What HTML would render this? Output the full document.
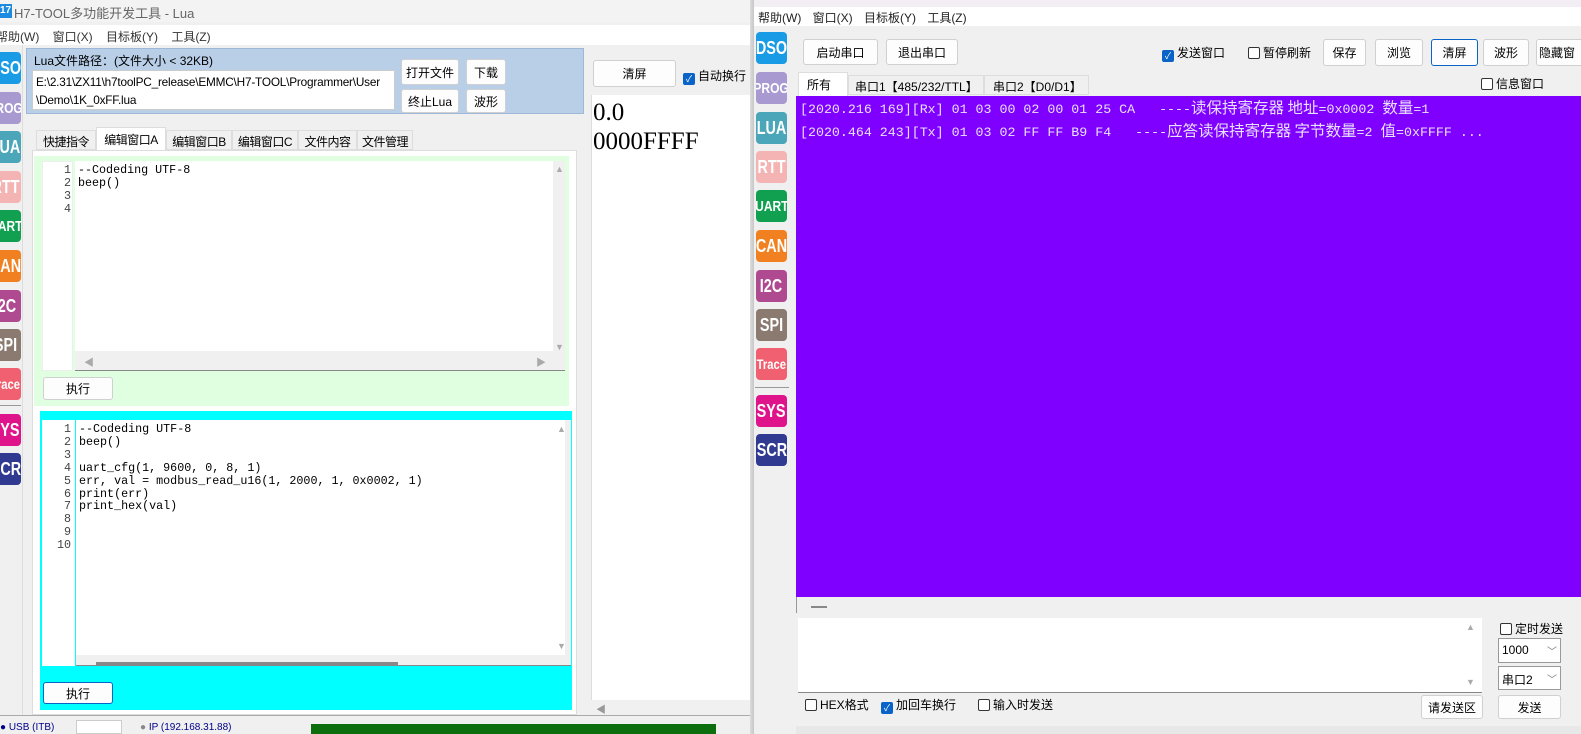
<!DOCTYPE html><html><head><meta charset="utf-8"><style>
*{box-sizing:border-box;margin:0;padding:0}
body{width:1581px;height:734px;position:relative;overflow:hidden;background:#f0f0f0;font-family:"Liberation Sans","Noto Sans CJK SC",sans-serif;font-size:12px;color:#000}
.a{position:absolute;white-space:nowrap}
.ic{position:absolute;width:31px;height:32px;border-radius:4px;color:#fff;font-weight:bold;font-size:18px;display:flex;align-items:center;justify-content:center;font-family:"Liberation Sans Narrow","Liberation Sans",sans-serif;overflow:hidden}
.ic span{display:inline-block;transform:scaleX(.8)}
.btn{position:absolute;background:#fdfdfd;border:1px solid #d0d0d0;border-radius:3px;display:flex;align-items:center;justify-content:center;font-size:12px;white-space:nowrap}
.code{font-family:"Liberation Mono","Noto Sans CJK SC",monospace;font-size:11.7px;line-height:12.9px;white-space:pre}
.cb{display:inline-block;width:12px;height:12px;border:1px solid #333;border-radius:2px;vertical-align:-2px;margin-right:3px;background:#fff}
.cbk{background:#0a64c8;border-color:#0a64c8;color:#fff;font-size:9px;line-height:10px;text-align:center}
.tab{position:absolute;top:130px;height:20px;border:1px solid #ddd;font-size:12px;padding:2px 0;text-align:center;white-space:nowrap;letter-spacing:-0.5px}
.pt{font-family:"Liberation Mono",monospace;font-size:13.3px}
.pc{font-family:"Noto Sans CJK SC",sans-serif;font-size:15.5px}
</style></head><body>
<!-- left window -->
<div class="a" style="left:0;top:0;width:750px;height:22px;background:#f3f3f3"></div>
<div class="a" style="left:0;top:4px;width:12px;height:14px;background:#1a8be0;color:#fff;font-size:10px;font-weight:bold;line-height:14px">17</div>
<div class="a" style="left:14px;top:3px;color:#666;font-size:13px">H7-TOOL多功能开发工具 - Lua</div>
<div class="a" style="left:0;top:25px;width:750px;height:20px;background:#fff"></div>
<div class="a" style="left:-4px;top:28px;font-size:12px;color:#333;word-spacing:10px">帮助(W) 窗口(X) 目标板(Y) 工具(Z)</div>
<div class="a" style="left:0;top:45px;width:23px;height:670px;background:#f0f0f0;border-right:1px solid #ddd"></div>
<div class="ic" style="left:-10px;top:52px;background:#1a9be6"><span>DSO</span></div>
<div class="ic" style="left:-10px;top:92px;background:#a89ad0;font-size:15px"><span>PROG</span></div>
<div class="ic" style="left:-10px;top:131px;background:#4aa6b8"><span>LUA</span></div>
<div class="ic" style="left:-10px;top:171px;background:#f5b4b4"><span>RTT</span></div>
<div class="ic" style="left:-10px;top:210px;background:#10a050;font-size:15px"><span>UART</span></div>
<div class="ic" style="left:-10px;top:250px;background:#f08020"><span>CAN</span></div>
<div class="ic" style="left:-10px;top:290px;background:#b04a90"><span>I2C</span></div>
<div class="ic" style="left:-10px;top:329px;background:#8a7a70"><span>SPI</span></div>
<div class="ic" style="left:-10px;top:368px;background:#f06070;font-size:14px"><span>Trace</span></div>
<div class="a" style="left:0;top:405px;width:21px;height:1px;background:#999"></div>
<div class="ic" style="left:-10px;top:414px;background:#e0148a"><span>SYS</span></div>
<div class="ic" style="left:-10px;top:453px;background:#303a90"><span>SCR</span></div>

<div class="a" style="left:26px;top:48px;width:558px;height:66px;background:#b9cfe8;border:1px solid #a0b8d8"></div>
<div class="a" style="left:34px;top:52px;font-size:12px">Lua文件路径：(文件大小 &lt; 32KB)</div>
<div class="a" style="left:32px;top:70px;width:363px;height:40px;background:#fff;border:1px solid #ccc;padding:2px 3px;font-size:11.8px;line-height:18px;letter-spacing:-0.2px">E:\2.31\ZX11\h7toolPC_release\EMMC\H7-TOOL\Programmer\User<br>\Demo\1K_0xFF.lua</div>
<div class="btn" style="left:401px;top:59px;width:58px;height:26px">打开文件</div>
<div class="btn" style="left:466px;top:59px;width:40px;height:26px">下载</div>
<div class="btn" style="left:401px;top:89px;width:58px;height:24px">终止Lua</div>
<div class="btn" style="left:466px;top:89px;width:40px;height:24px">波形</div>

<div class="tab" style="left:36px;width:60px">快捷指令</div>
<div class="tab" style="left:96px;top:127px;height:23px;width:70px;background:#fff;border-bottom:none;padding-top:3px">编辑窗口A</div>
<div class="tab" style="left:166px;width:66px">编辑窗口B</div>
<div class="tab" style="left:232px;width:66px">编辑窗口C</div>
<div class="tab" style="left:298px;width:59px">文件内容</div>
<div class="tab" style="left:357px;width:56px">文件管理</div>
<div class="a" style="left:32px;top:150px;width:545px;height:565px;background:#fff;border:1px solid #ddd"></div>
<div class="a" style="left:34px;top:156px;width:535px;height:250px;background:#e0ffe0"></div>
<div class="a" style="left:42px;top:161px;width:31px;height:210px;background:#fff;border:1px solid #eee"></div>
<div class="a code" style="left:42px;top:164px;width:29px;text-align:right;color:#444">1
2
3
4</div>
<div class="a" style="left:75px;top:161px;width:490px;height:210px;background:#f0f0f0;border-bottom:1px solid #888"></div>
<div class="a code" style="left:75px;top:161px;width:478px;height:190px;background:#fff;padding:3px 3px">--Codeding UTF-8
beep()</div>
<div class="a" style="left:84px;top:354px;color:#aaa;font-size:10px">◀</div>
<div class="a" style="left:536px;top:354px;color:#aaa;font-size:10px">▶</div>
<div class="a" style="left:555px;top:164px;color:#aaa;font-size:9px">▲</div>
<div class="a" style="left:555px;top:342px;color:#aaa;font-size:9px">▼</div>
<div class="btn" style="left:43px;top:377px;width:70px;height:23px">执行</div>

<div class="a" style="left:40px;top:411px;width:532px;height:299px;background:#00ffff"></div>
<div class="a" style="left:42px;top:420px;width:33px;height:246px;background:#fff"></div>
<div class="a code" style="left:42px;top:423px;width:29px;text-align:right;color:#444">1
2
3
4
5
6
7
8
9
10</div>
<div class="a" style="left:76px;top:420px;width:495px;height:246px;background:#f0f0f0;border-bottom:1px solid #888"></div>
<div class="a code" style="left:76px;top:420px;width:489px;height:235px;background:#fff;padding:3px 3px">--Codeding UTF-8
beep()

uart_cfg(1, 9600, 0, 8, 1)
err, val = modbus_read_u16(1, 2000, 1, 0x0002, 1)
print(err)
print_hex(val)</div>
<div class="a" style="left:96px;top:662px;width:302px;height:3px;background:#888"></div>
<div class="a" style="left:557px;top:424px;color:#aaa;font-size:9px">▲</div>
<div class="a" style="left:557px;top:641px;color:#aaa;font-size:9px">▼</div>
<div class="btn" style="left:43px;top:682px;width:70px;height:22px;border-color:#0a64c8">执行</div>

<div class="btn" style="left:593px;top:60px;width:83px;height:27px">清屏</div>
<div class="a" style="left:683px;top:67px;font-size:12px"><span class="cb cbk">✓</span>自动换行</div>
<div class="a" style="left:591px;top:95px;width:160px;height:620px;background:#fff;border-left:1px solid #ddd"></div>
<div class="a" style="left:593px;top:98px;font-family:'Liberation Serif','Noto Serif CJK SC',serif;font-size:25px;line-height:29px">0.0<br>0000FFFF</div>
<div class="a" style="left:591px;top:700px;width:160px;height:15px;background:#f0f0f0"></div>
<div class="a" style="left:596px;top:701px;color:#999;font-size:10px">◀</div>

<div class="a" style="left:0;top:715px;width:750px;height:19px;background:#f0f0f0;border-top:1px solid #aaa"></div>
<div class="a" style="left:0;top:722px;font-size:10px;color:#008">● USB (ITB)</div>
<div class="a" style="left:76px;top:720px;width:46px;height:14px;background:#fff;border:1px solid #ccc"></div>
<div class="a" style="left:140px;top:722px;font-size:10px;color:#008"><span style="color:#888">●</span> IP (192.168.31.88)</div>
<div class="a" style="left:311px;top:724px;width:405px;height:10px;background:#0c6e0c"></div>

<!-- right window -->
<div class="a" style="left:750px;top:0;width:6px;height:734px;background:linear-gradient(90deg,#ddd,#bbb)"></div>
<div class="a" style="left:754px;top:0;width:827px;height:734px;background:#f0f0f0"></div>
<div class="a" style="left:754px;top:0;width:827px;height:7px;background:#f3eef3"></div>
<div class="a" style="left:754px;top:7px;width:827px;height:19px;background:#fff"></div>
<div class="a" style="left:758px;top:9px;font-size:12px;color:#222;word-spacing:8px">帮助(W) 窗口(X) 目标板(Y) 工具(Z)</div>
<div class="ic" style="left:756px;top:32px;background:#1a9be6"><span>DSO</span></div>
<div class="ic" style="left:756px;top:72px;background:#a89ad0;font-size:15px"><span>PROG</span></div>
<div class="ic" style="left:756px;top:112px;background:#4aa6b8"><span>LUA</span></div>
<div class="ic" style="left:756px;top:151px;background:#f5b4b4"><span>RTT</span></div>
<div class="ic" style="left:756px;top:190px;background:#10a050;font-size:15px"><span>UART</span></div>
<div class="ic" style="left:756px;top:230px;background:#f08020"><span>CAN</span></div>
<div class="ic" style="left:756px;top:270px;background:#b04a90"><span>I2C</span></div>
<div class="ic" style="left:756px;top:309px;background:#8a7a70"><span>SPI</span></div>
<div class="ic" style="left:756px;top:348px;background:#f06070;font-size:14px"><span>Trace</span></div>
<div class="a" style="left:755px;top:387px;width:34px;height:1px;background:#999"></div>
<div class="ic" style="left:756px;top:395px;background:#e0148a"><span>SYS</span></div>
<div class="ic" style="left:756px;top:434px;background:#303a90"><span>SCR</span></div>

<div class="btn" style="left:803px;top:39px;width:75px;height:26px">启动串口</div>
<div class="btn" style="left:886px;top:39px;width:72px;height:26px">退出串口</div>
<div class="a" style="left:1162px;top:44px;font-size:12px"><span class="cb cbk">✓</span>发送窗口</div>
<div class="a" style="left:1248px;top:44px;font-size:12px"><span class="cb"></span>暂停刷新</div>
<div class="btn" style="left:1323px;top:39px;width:43px;height:27px">保存</div>
<div class="btn" style="left:1375px;top:39px;width:48px;height:27px">浏览</div>
<div class="btn" style="left:1431px;top:39px;width:47px;height:27px;border-color:#0a64c8">清屏</div>
<div class="btn" style="left:1483px;top:39px;width:46px;height:27px">波形</div>
<div class="btn" style="left:1536px;top:39px;width:50px;height:27px;justify-content:flex-start;padding-left:2px">隐藏窗</div>

<div class="a" style="left:798px;top:72px;width:50px;height:24px;background:#fff;border:1px solid #ddd;border-bottom:none;padding:3px 8px">所有</div>
<div class="a" style="left:848px;top:75px;width:136px;height:20px;border:1px solid #ddd;padding:2px 6px">串口1【485/232/TTL】</div>
<div class="a" style="left:984px;top:75px;width:105px;height:20px;border:1px solid #ddd;padding:2px 8px">串口2【D0/D1】</div>
<div class="a" style="left:1481px;top:75px;font-size:12px"><span class="cb"></span>信息窗口</div>

<div class="a" style="left:796px;top:96px;width:785px;height:501px;background:#8000ff"></div>
<div class="a" style="left:800px;top:97px;line-height:20px;color:#e8e0ff;white-space:pre"><span class="pt">[2020.216 169][Rx] 01 03 00 02 00 01 25 CA   ----</span><span class="pc">读保持寄存器 </span><span class="pc">地址</span><span class="pt">=0x0002 </span><span class="pc">数量</span><span class="pt">=1</span>
<span class="pt">[2020.464 243][Tx] 01 03 02 FF FF B9 F4   ----</span><span class="pc">应答读保持寄存器 字节数量</span><span class="pt">=2 </span><span class="pc">值</span><span class="pt">=0xFFFF ...</span></div>
<div class="a" style="left:796px;top:597px;width:1px;height:16px;background:#999"></div>
<div class="a" style="left:811px;top:606px;width:16px;height:2px;background:#888"></div>

<div class="a" style="left:798px;top:618px;width:684px;height:75px;background:#fff;border-bottom:1px solid #888"></div>
<div class="a" style="left:1466px;top:622px;color:#aaa;font-size:9px">▲</div>
<div class="a" style="left:1466px;top:677px;color:#aaa;font-size:9px">▼</div>
<div class="a" style="left:1500px;top:620px;font-size:12px"><span class="cb"></span>定时发送</div>
<div class="a" style="left:1498px;top:638px;width:63px;height:25px;background:#fff;border:1px solid #999;padding:4px 3px">1000<span style="float:right;color:#777;font-size:10px">﹀</span></div>
<div class="a" style="left:1498px;top:666px;width:63px;height:24px;background:#fff;border:1px solid #999;padding:4px 3px">串口2<span style="float:right;color:#777;font-size:10px">﹀</span></div>
<div class="a" style="left:805px;top:696px;font-size:12px"><span class="cb"></span>HEX格式</div>
<div class="a" style="left:881px;top:696px;font-size:12px"><span class="cb cbk">✓</span>加回车换行</div>
<div class="a" style="left:978px;top:696px;font-size:12px"><span class="cb"></span>输入时发送</div>
<div class="btn" style="left:1421px;top:695px;width:62px;height:24px">请发送区</div>
<div class="btn" style="left:1498px;top:695px;width:63px;height:24px">发送</div>
<div class="a" style="left:796px;top:726px;width:785px;height:8px;background:#e8e8e8"></div>
</body></html>
